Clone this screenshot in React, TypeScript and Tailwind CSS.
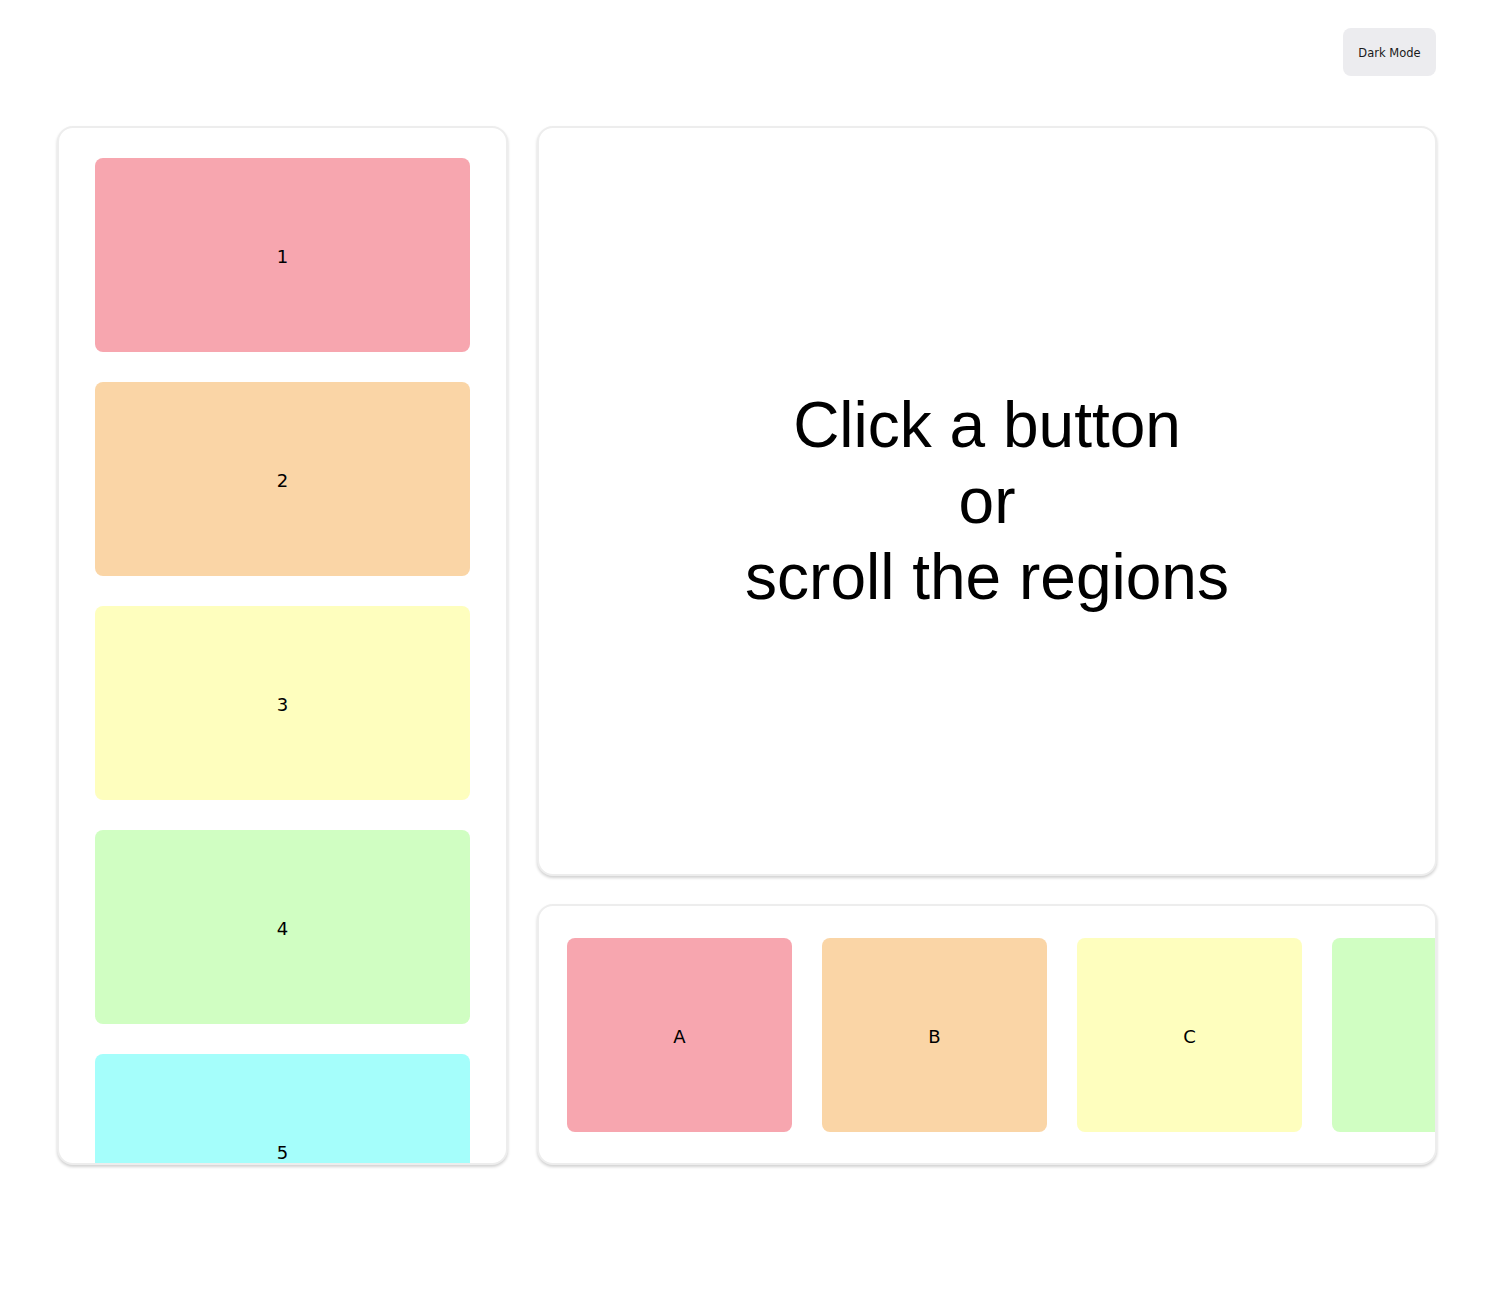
const vertical = [
  { label: "1", bg: "bg-[#f7a6af]" },
  { label: "2", bg: "bg-[#fad5a6]" },
  { label: "3", bg: "bg-[#fefebe]" },
  { label: "4", bg: "bg-[#d0fec2]" },
  { label: "5", bg: "bg-[#a5fefb]" },
];

// D sits past the visible edge of the strip, so its label is never seen
const horizontal = [
  { label: "A", bg: "bg-[#f7a6af]" },
  { label: "B", bg: "bg-[#fad5a6]" },
  { label: "C", bg: "bg-[#fefebe]" },
  { label: "", bg: "bg-[#d0fec2]" },
];

export default function App() {
  return (
    <main className="min-h-[1290px] bg-white text-black font-['DejaVu_Sans',sans-serif]">
      <div className="ml-[57px] w-[1380px]">
        {/* header */}
        <header className="flex justify-end pt-[28px] pr-[1px] h-[126px]">
          <button className="h-[48px] w-[93px] rounded-lg bg-[#ececef] pt-[3px] text-[11.5px] text-[#1a1a1a]">
            Dark Mode
          </button>
        </header>

        <section className="grid grid-cols-[451px_900px] gap-[29px]">
          {/* left: vertical region */}
          <div className="h-[1039px] overflow-hidden rounded-2xl border-2 border-[#ededed] bg-white shadow-[0_2px_3px_rgba(0,0,0,0.18)]">
            <div className="flex flex-col gap-[30px] px-[36px] pt-[30px]">
              {vertical.map((c) => (
                <div
                  key={c.label}
                  className={`flex h-[194px] shrink-0 items-center justify-center rounded-lg pt-[2px] text-[18px] ${c.bg}`}
                >
                  {c.label}
                </div>
              ))}
            </div>
          </div>

          {/* right column */}
          <div className="flex flex-col gap-[28px]">
            <div className="flex h-[750px] items-center justify-center rounded-2xl border-2 border-[#ededed] bg-white shadow-[0_2px_3px_rgba(0,0,0,0.18)]">
              <p className="text-center font-['Liberation_Sans',Arial,sans-serif] text-[64px] leading-[76px]">
                Click a button
                <br />
                or
                <br />
                scroll the regions
              </p>
            </div>

            <div className="h-[261px] overflow-hidden rounded-2xl border-2 border-[#ededed] bg-white shadow-[0_2px_3px_rgba(0,0,0,0.18)]">
              <div className="flex gap-[30px] pl-[28px] pt-[32px]">
                {horizontal.map((c, i) => (
                  <div
                    key={i}
                    className={`flex h-[194px] w-[225px] shrink-0 items-center justify-center rounded-lg pt-[2px] text-[18px] ${c.bg}`}
                  >
                    {c.label}
                  </div>
                ))}
              </div>
            </div>
          </div>
        </section>
      </div>
    </main>
  );
}
